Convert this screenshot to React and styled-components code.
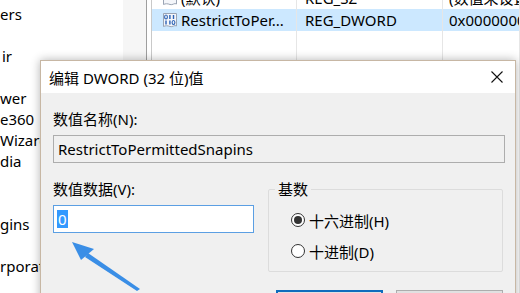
import React from 'react'
import styled, { createGlobalStyle } from 'styled-components'

const GlobalStyle = createGlobalStyle`
  html, body {
    margin: 0;
    padding: 0;
    overflow: hidden;
    background: #fff;
  }
`

const FONT = `"Noto Sans", "Noto Sans CJK SC", sans-serif`

const Screen = styled.div`
  position: relative;
  width: 520px;
  height: 293px;
  overflow: hidden;
  background: #fff;
  font-family: ${FONT};
  font-size: 15px;
  color: #000;
`

const RegEdit = styled.div`
  display: flex;
  height: 100%;
`

const TreePane = styled.div`
  width: 123px;
  overflow: hidden;
  padding-top: 4px;
`

const TreeItem = styled.div`
  height: 21px;
  line-height: 21px;
  white-space: nowrap;
  padding-left: ${p => p.$indent || 0}px;
`

const TreeGutter = styled.div`
  width: 23px;
  background: #f6f6f6;
`

const Splitter = styled.div`
  width: 4px;
  border-left: 1px solid #9f9f9f;
  border-right: 1px solid #c9c9c9;
`

const ListPane = styled.div`
  flex: 1;
  display: flex;
  flex-direction: column;
  overflow: hidden;
`

const ListBody = styled.div`
  flex: 1;
  display: flex;
  flex-direction: column;
  margin-top: -13px;
`

const ListRow = styled.div`
  display: grid;
  grid-template-columns: 145px 146px 1fr;
  height: 22px;
  line-height: 22px;
  background: ${p => (p.$selected ? '#cce8ff' : 'transparent')};
  flex: ${p => (p.$fill ? 1 : 'none')};
`

const Cell = styled.div`
  display: flex;
  align-items: center;
  gap: 3px;
  padding-left: ${p => p.$pad}px;
  border-right: 1px solid #e6e6e6;
  white-space: nowrap;
  overflow: hidden;
`

const Dialog = styled.div`
  position: absolute;
  left: 40px;
  top: 60px;
  width: 476px;
  bottom: -60px;
  box-sizing: border-box;
  border: 1px solid #c7b7a4;
  background: #f0f0f0;
  box-shadow: 0 0 9px rgba(0, 0, 0, 0.3);
  display: flex;
  flex-direction: column;
`

const TitleBar = styled.div`
  height: 32px;
  background: #fff;
  display: flex;
  align-items: center;
  justify-content: space-between;
  padding: 0 12px 0 8px;
`

const Title = styled.span`
  font-size: 15px;
`

const CloseButton = styled.div`
  display: flex;
  align-items: center;
`

const Body = styled.div`
  padding: 16px 10px 0 12px;
`

const Label = styled.div`
  height: 20px;
  line-height: 20px;
  margin-bottom: 6px;
`

const NameField = styled.div`
  height: 28px;
  box-sizing: border-box;
  border: 1px solid #adadad;
  background: #f0f0f0;
  padding-left: 4px;
  line-height: 26px;
`

const Lower = styled.div`
  display: grid;
  grid-template-columns: 201px 235px;
  column-gap: 14px;
  margin-top: 16px;
`

const DataInput = styled.div`
  height: 28px;
  box-sizing: border-box;
  border: 1px solid #5b9fe3;
  background: #fff;
  padding-left: 3px;
  display: flex;
  align-items: center;
`

const Selected = styled.span`
  background: #3399ff;
  color: #fff;
  line-height: 18px;
  padding: 0 1px;
`

const GroupBox = styled.fieldset`
  margin: 0;
  padding: 0 6px 0 6px;
  border: 1px solid #dcdcdc;
  border-radius: 2px;
  height: 93px;
  box-sizing: border-box;
  min-width: 0;
`

const Legend = styled.legend`
  padding: 0 3px;
  line-height: 20px;
`

const RadioRow = styled.label`
  display: flex;
  align-items: center;
  gap: 4px;
  height: 20px;
  margin: ${p => p.$top}px 0 0 16px;
`

const RadioDot = styled.span`
  width: 14px;
  height: 14px;
  box-sizing: border-box;
  border-radius: 50%;
  border: 1px solid #333;
  background: #fff;
  display: flex;
  align-items: center;
  justify-content: center;

  &::after {
    content: '';
    width: 8px;
    height: 8px;
    border-radius: 50%;
    background: ${p => (p.$checked ? '#333' : 'transparent')};
  }
`

const Buttons = styled.div`
  grid-column: 2;
  display: flex;
  justify-content: flex-end;
  gap: 13px;
  margin-top: 18px;
`

const Button = styled.div`
  width: 107px;
  height: 23px;
  box-sizing: border-box;
  border: ${p => (p.$primary ? '2px solid #0f6cbd' : '1px solid #adadad')};
  background: #e1e1e1;
  text-align: center;
  line-height: 20px;
`

const Overlay = styled.svg`
  position: absolute;
  left: 0;
  top: 0;
  pointer-events: none;
`

const DwordIcon = () => (
  <svg width="16" height="17" viewBox="0 0 16 17">
    <path d="M1.5 1.5h13v12.5c-2 -1.5 -4 1.5 -6.5 0.5s-4.5 -1 -6.5 0z" fill="#f4f6fa" stroke="#9aa4b4" />
    <ellipse cx="4" cy="5" rx="1.4" ry="2" fill="none" stroke="#2b62b5" strokeWidth="1.1" />
    <rect x="7.2" y="3" width="1.4" height="4" fill="#2b62b5" />
    <rect x="10.8" y="3" width="1.4" height="4" fill="#2b62b5" />
    <rect x="3.3" y="8.5" width="1.4" height="4" fill="#2b62b5" />
    <rect x="7.2" y="8.5" width="1.4" height="4" fill="#2b62b5" />
    <ellipse cx="11.5" cy="10.5" rx="1.4" ry="2" fill="none" stroke="#2b62b5" strokeWidth="1.1" />
  </svg>
)

const StringIcon = () => (
  <svg width="16" height="17" viewBox="0 0 16 17">
    <path d="M1.5 1.5h13v12.5c-2 -1.5 -4 1.5 -6.5 0.5s-4.5 -1 -6.5 0z" fill="#f4f6fa" stroke="#9aa4b4" />
    <path d="M4 9l2 -5 2 5M5 7.5h2M10 4v5M10 7c1.5 -2 3 -1 3 0.5s-1.5 2.5 -3 0.5" fill="none" stroke="#c0392b" strokeWidth="1.1" />
  </svg>
)

const CloseIcon = () => (
  <svg width="12" height="12" viewBox="0 0 12 12">
    <path d="M0.5 0.5L11.5 11.5M11.5 0.5L0.5 11.5" stroke="#111" strokeWidth="1.1" />
  </svg>
)

// the tree is scrolled right, so only the tails of the key names show
const treeItems = [
  { text: 'ers' },
  { text: '' },
  { text: 'ir', indent: 2 },
  { text: '' },
  { text: 'wer' },
  { text: 'e360' },
  { text: 'Wizard' },
  { text: 'dia' },
  { text: '' },
  { text: '' },
  { text: 'gins' },
  { text: '' },
  { text: 'rporation' },
]

const App = () => (
  <>
    <GlobalStyle />
    <Screen>
      <RegEdit>
        <TreePane>
          {treeItems.map((item, i) => (
            <TreeItem key={i} $indent={item.indent}>{item.text}</TreeItem>
          ))}
        </TreePane>
        <TreeGutter />
        <Splitter />
        <ListPane>
          <ListBody>
            <ListRow>
              <Cell $pad={10}><StringIcon />(默认)</Cell>
              <Cell $pad={8}>REG_SZ</Cell>
              <Cell $pad={6}>(数值未设置)</Cell>
            </ListRow>
            <ListRow $selected>
              <Cell $pad={10}><DwordIcon />RestrictToPer...</Cell>
              <Cell $pad={8}>REG_DWORD</Cell>
              <Cell $pad={6}>0x00000000 (0)</Cell>
            </ListRow>
            <ListRow $fill>
              <Cell />
              <Cell />
              <Cell />
            </ListRow>
          </ListBody>
        </ListPane>
      </RegEdit>

      <Dialog>
        <TitleBar>
          <Title>编辑 DWORD (32 位)值</Title>
          <CloseButton><CloseIcon /></CloseButton>
        </TitleBar>
        <Body>
          <Label>数值名称(N):</Label>
          <NameField>RestrictToPermittedSnapins</NameField>
          <Lower>
            <div>
              <Label>数值数据(V):</Label>
              <DataInput><Selected>0</Selected></DataInput>
            </div>
            <GroupBox>
              <Legend>基数</Legend>
              <RadioRow $top={11}><RadioDot $checked />十六进制(H)</RadioRow>
              <RadioRow $top={11}><RadioDot />十进制(D)</RadioRow>
            </GroupBox>
            <Buttons>
              <Button $primary>确定</Button>
              <Button>取消</Button>
            </Buttons>
          </Lower>
        </Body>
      </Dialog>

      <Overlay width="520" height="293" viewBox="0 0 520 293">
        <path d="M88 253 L140 289 L137 291 L85 257 Z" fill="#3a8ee6" />
        <path d="M72 242 L94 249 L81 260 Z" fill="#3a8ee6" />
      </Overlay>
    </Screen>
  </>
)

export default App
